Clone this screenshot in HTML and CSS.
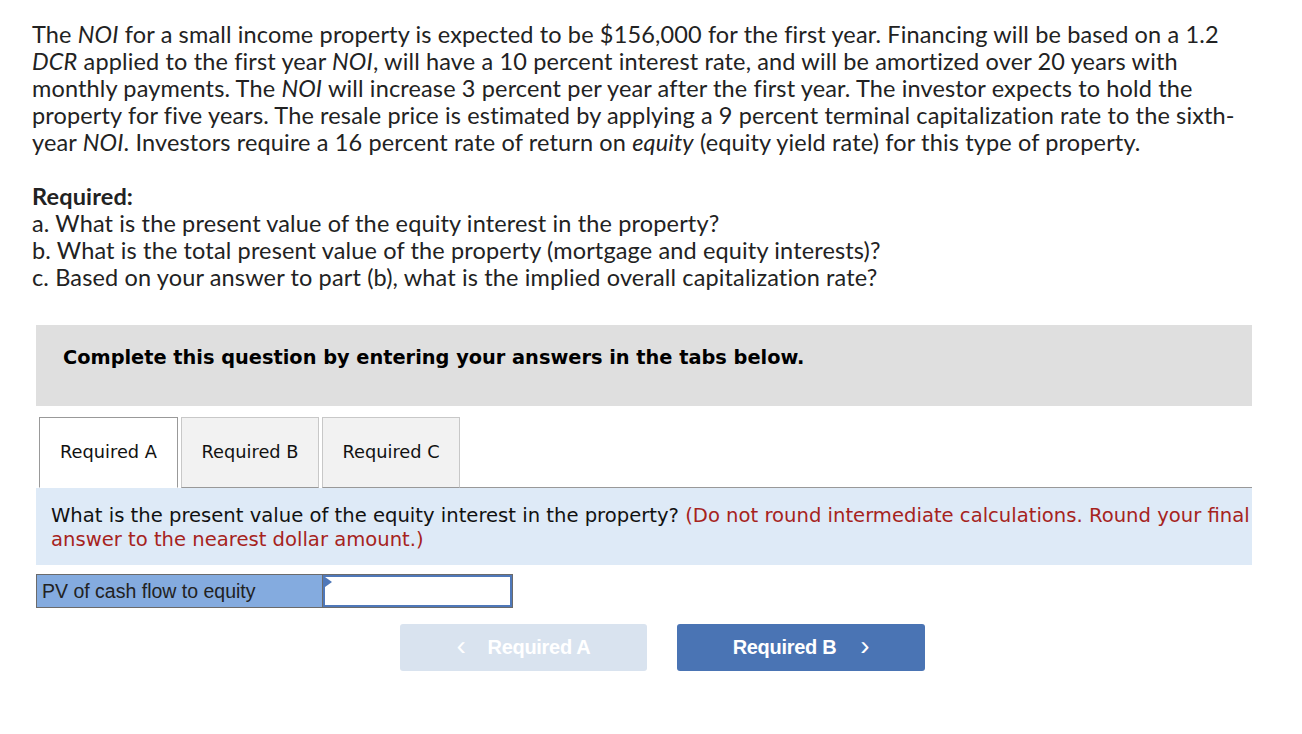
FILE: index.html
```html
<!DOCTYPE html>
<html>
<head>
<meta charset="utf-8">
<link rel="stylesheet" href="styles.css">
</head>
<body>
<div class="page">
  <p class="intro">The <i>NOI</i> for a small income property is expected to be $156,000 for the first year. Financing will be based on a 1.2<br><i>DCR</i> applied to the first year <i>NOI</i>, will have a 10 percent interest rate, and will be amortized over 20 years with<br>monthly payments. The <i>NOI</i> will increase 3 percent per year after the first year. The investor expects to hold the<br>property for five years. The resale price is estimated by applying a 9 percent terminal capitalization rate to the sixth-<br>year <i>NOI</i>. Investors require a 16 percent rate of return on <i>equity</i> (equity yield rate) for this type of property.</p>
  <div class="required">
    <b>Required:</b><br>
    a. What is the present value of the equity interest in the property?<br>
    b. What is the total present value of the property (mortgage and equity interests)?<br>
    c. Based on your answer to part (b), what is the implied overall capitalization rate?
  </div>

  <div class="panel">
    <div class="banner">Complete this question by entering your answers in the tabs below.</div>
    <div class="tabs">
      <div class="tab active">Required A</div>
      <div class="tab">Required B</div>
      <div class="tab">Required C</div>
      <div class="tab-fill"></div>
    </div>
    <div class="question">What is the present value of the equity interest in the property? <span class="note">(Do not round intermediate calculations. Round your final<br>answer to the nearest dollar amount.)</span></div>
    <div class="answer-row">
      <div class="label">PV of cash flow to equity</div>
      <div class="input"><span class="flag"></span></div>
    </div>
    <div class="nav">
      <div class="btn disabled"><span class="chev">&lsaquo;</span>Required A</div>
      <div class="btn primary">Required B<span class="chev right">&rsaquo;</span></div>
    </div>
  </div>
</div>
</body>
</html>
```

FILE: styles.css
```css
html, body {
  margin: 0;
  padding: 0;
  background: #fff;
}
.page {
  padding: 21px 0 0 32px;
  font-family: "Lato", "Open Sans", sans-serif;
  color: #222;
}
.intro {
  margin: 0;
  font-size: 23.5px;
  letter-spacing: 0.14px;
  line-height: 27px;
}
.required {
  margin-top: 27px;
  font-size: 23.5px;
  letter-spacing: 0.14px;
  line-height: 27px;
}
.required b {
  font-weight: 700;
}
.panel {
  margin: 34px 0 0 4px;
  width: 1216px;
  font-family: "DejaVu Sans", Verdana, sans-serif;
}
.banner {
  background: #dfdfdf;
  height: 81px;
  box-sizing: border-box;
  padding: 21px 0 0 27px;
  font-size: 19.35px;
  font-weight: bold;
  color: #000;
  line-height: 24px;
}
.tabs {
  display: flex;
  margin-top: 11px;
  height: 71px;
}
.tab {
  width: 138px;
  box-sizing: border-box;
  background: #f2f2f2;
  border: 1px solid #c8c8c8;
  border-bottom: 1px solid #999;
  margin-left: 3px;
  font-size: 17.8px;
  color: #111;
  display: flex;
  align-items: center;
  justify-content: center;
  padding-bottom: 2px;
}
.tab.active {
  width: 139px;
  background: #fff;
  border: 1px solid #999;
  border-bottom: 1px solid #fff;
}
.tab-fill {
  flex: 1;
  border-bottom: 1px solid #999;
}
.question {
  background: #deeaf7;
  height: 77px;
  box-sizing: border-box;
  padding: 16px 0 0 15px;
  font-size: 19.6px;
  line-height: 24px;
  color: #111;
  overflow: hidden;
  white-space: nowrap;
}
.note {
  color: #a6231d;
}
.answer-row {
  display: flex;
  margin-top: 9px;
  height: 34px;
}
.label {
  width: 286px;
  box-sizing: border-box;
  background: #84abdf;
  border: 1px solid #6b6b6b;
  border-right: none;
  font-family: "Liberation Sans", Arial, sans-serif;
  font-size: 19.5px;
  color: #222;
  padding: 5px 0 0 5px;
}
.input {
  position: relative;
  width: 191px;
  box-sizing: border-box;
  background: #fff;
  border: 1px solid #6b6b6b;
  box-shadow: inset 0 0 0 2px #4f78b9;
}
.flag {
  position: absolute;
  left: 2px;
  top: 2px;
  width: 0;
  height: 0;
  border-top: 5px solid transparent;
  border-bottom: 5px solid transparent;
  border-left: 7px solid #4f78b9;
}
.nav {
  display: flex;
  gap: 30px;
  margin: 16px 0 0 364px;
}
.btn {
  width: 247px;
  height: 47px;
  border-radius: 3px;
  display: flex;
  align-items: center;
  justify-content: center;
  font-family: "Liberation Sans", Arial, sans-serif;
  font-weight: bold;
  font-size: 20px;
  letter-spacing: -0.3px;
  color: #fff;
}
.btn.disabled {
  background: #d9e3ef;
}
.btn.primary {
  width: 248px;
  background: #4a74b4;
}
.chev {
  font-weight: normal;
  font-size: 28px;
  line-height: 20px;
  margin-right: 22px;
  position: relative;
  top: -2px;
}
.chev.right {
  margin-right: 0;
  margin-left: 24px;
}
```
